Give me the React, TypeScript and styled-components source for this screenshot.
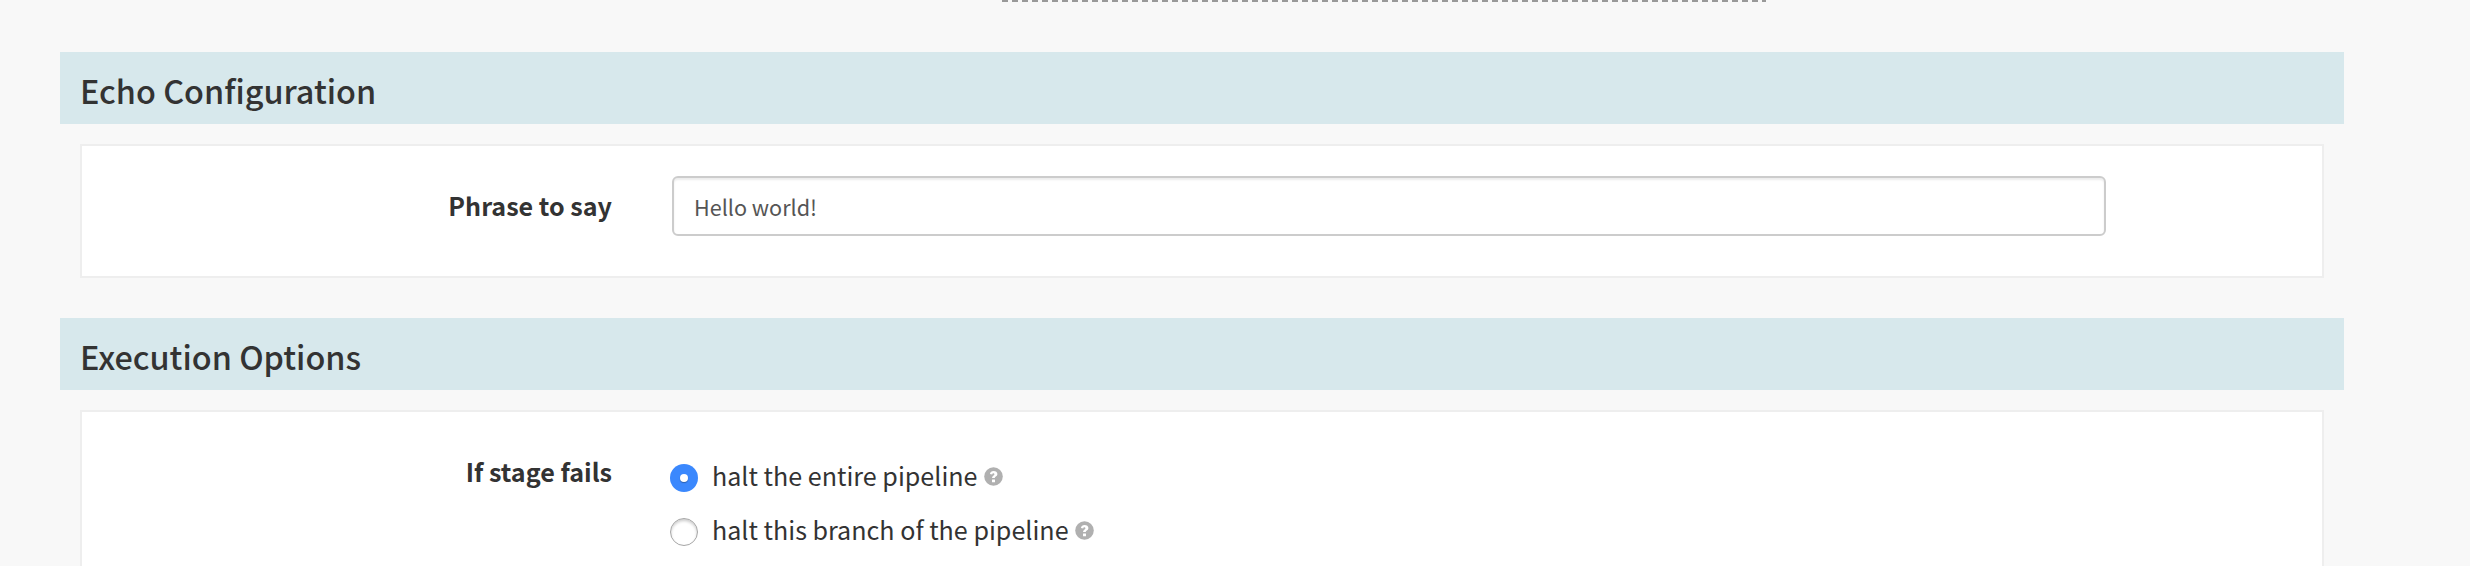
import React from "react";
import styled, { createGlobalStyle, css } from "styled-components";

const GlobalStyle = createGlobalStyle`
  * { box-sizing: border-box; }
  body {
    margin: 0;
    background: #f8f8f8;
    color: #333;
    font-family: "Noto Sans CJK SC", "Noto Sans", sans-serif;
    font-size: 25.1px;
  }
`;

const Page = styled.main`
  height: 566px;
  overflow: hidden;
  padding: 0 126px 0 60px;
`;

const DropEdge = styled.div`
  width: 764px;
  height: 2px;
  margin: 0 0 50px 942px;
  background: repeating-linear-gradient(to right, #999 0 6px, transparent 6px 10px);
`;

const Section = styled.section`
  margin-bottom: 40px;
`;

const Heading = styled.h4`
  margin: 0 0 20px;
  height: 72px;
  padding: 16px 20px 0 20px;
  background: #d7e8ec;
  font-size: 32.4px;
  line-height: 44px;
  font-weight: 500;
`;

const Card = styled.div<{ $minHeight: number }>`
  display: flex;
  align-items: flex-start;
  min-height: ${(p) => p.$minHeight}px;
  margin: 0 20px;
  padding: 30px 216px 0 0;
  border: 2px solid #eee;
  background: #fff;
`;

const Label = styled.label`
  flex: 0 0 530px;
  margin-right: 60px;
  padding-top: 11px;
  text-align: right;
  font-weight: 700;
  line-height: 36px;
`;

const TextInput = styled.input`
  flex: 1;
  min-width: 0;
  height: 60px;
  padding: 0 22px 0 20px;
  border: 2px solid #ccc;
  border-radius: 6px;
  outline: none;
  background: #fff;
  box-shadow: inset 0 2px 2px rgba(0, 0, 0, 0.075);
  color: #555;
  font: 400 21.6px "Noto Sans CJK SC", "Noto Sans", sans-serif;
`;

const Options = styled.div`
  display: flex;
  flex-direction: column;
  gap: 18px;
  margin-left: -2px;
  padding-top: 15px;
`;

const Option = styled.label`
  display: flex;
  align-items: center;
  height: 36px;
  line-height: 36px;
  white-space: nowrap;
`;

const Radio = styled.span<{ $checked?: boolean }>`
  display: flex;
  align-items: center;
  justify-content: center;
  width: 28px;
  height: 28px;
  margin: 6px 14px 0 0;
  border-radius: 50%;
  ${(p) =>
    p.$checked
      ? css`
          background: #3b88fd;
          &::after {
            content: "";
            width: 8px;
            height: 8px;
            border-radius: 50%;
            background: #fff;
            box-shadow: 0 1px 1px rgba(0, 0, 0, 0.3);
          }
        `
      : css`
          background: #fff;
          border: 1px solid #a6a6a6;
          box-shadow: inset 0 2px 3px rgba(0, 0, 0, 0.2);
        `}
`;

const OptionText = styled.span`
  margin-right: 6px;
`;

const HelpSvg = styled.svg`
  width: 19px;
  height: 19px;
  margin-top: 3px;
`;

const HelpIcon = () => (
  <HelpSvg viewBox="0 0 19 19" aria-hidden="true">
    <circle cx="9.5" cy="9.5" r="9.3" fill="#b0b0b0" />
    <path
      d="M5.9 7.1C6.2 5 7.6 3.9 9.6 3.9c2.1 0 3.8 1.2 3.8 3.1 0 2.3-2.6 2.5-2.6 4H8.1c0-2.4 2.3-2.5 2.3-3.8 0-.6-.4-.9-1-.9-.7 0-1 .5-1.2 1.1z"
      fill="#fff"
    />
    <rect x="8" y="12.4" width="3" height="2.9" rx=".3" fill="#fff" />
  </HelpSvg>
);

export default function App() {
  return (
    <>
      <GlobalStyle />
      <Page>
        <DropEdge />
        <Section>
          <Heading>Echo Configuration</Heading>
          <Card $minHeight={134}>
            <Label htmlFor="phrase">Phrase to say</Label>
            <TextInput id="phrase" defaultValue="Hello world!" />
          </Card>
        </Section>
        <Section>
          <Heading>Execution Options</Heading>
          <Card $minHeight={300}>
            <Label as="span">If stage fails</Label>
            <Options>
              <Option>
                <Radio $checked />
                <OptionText>halt the entire pipeline</OptionText>
                <HelpIcon />
              </Option>
              <Option>
                <Radio />
                <OptionText>halt this branch of the pipeline</OptionText>
                <HelpIcon />
              </Option>
            </Options>
          </Card>
        </Section>
      </Page>
    </>
  );
}
